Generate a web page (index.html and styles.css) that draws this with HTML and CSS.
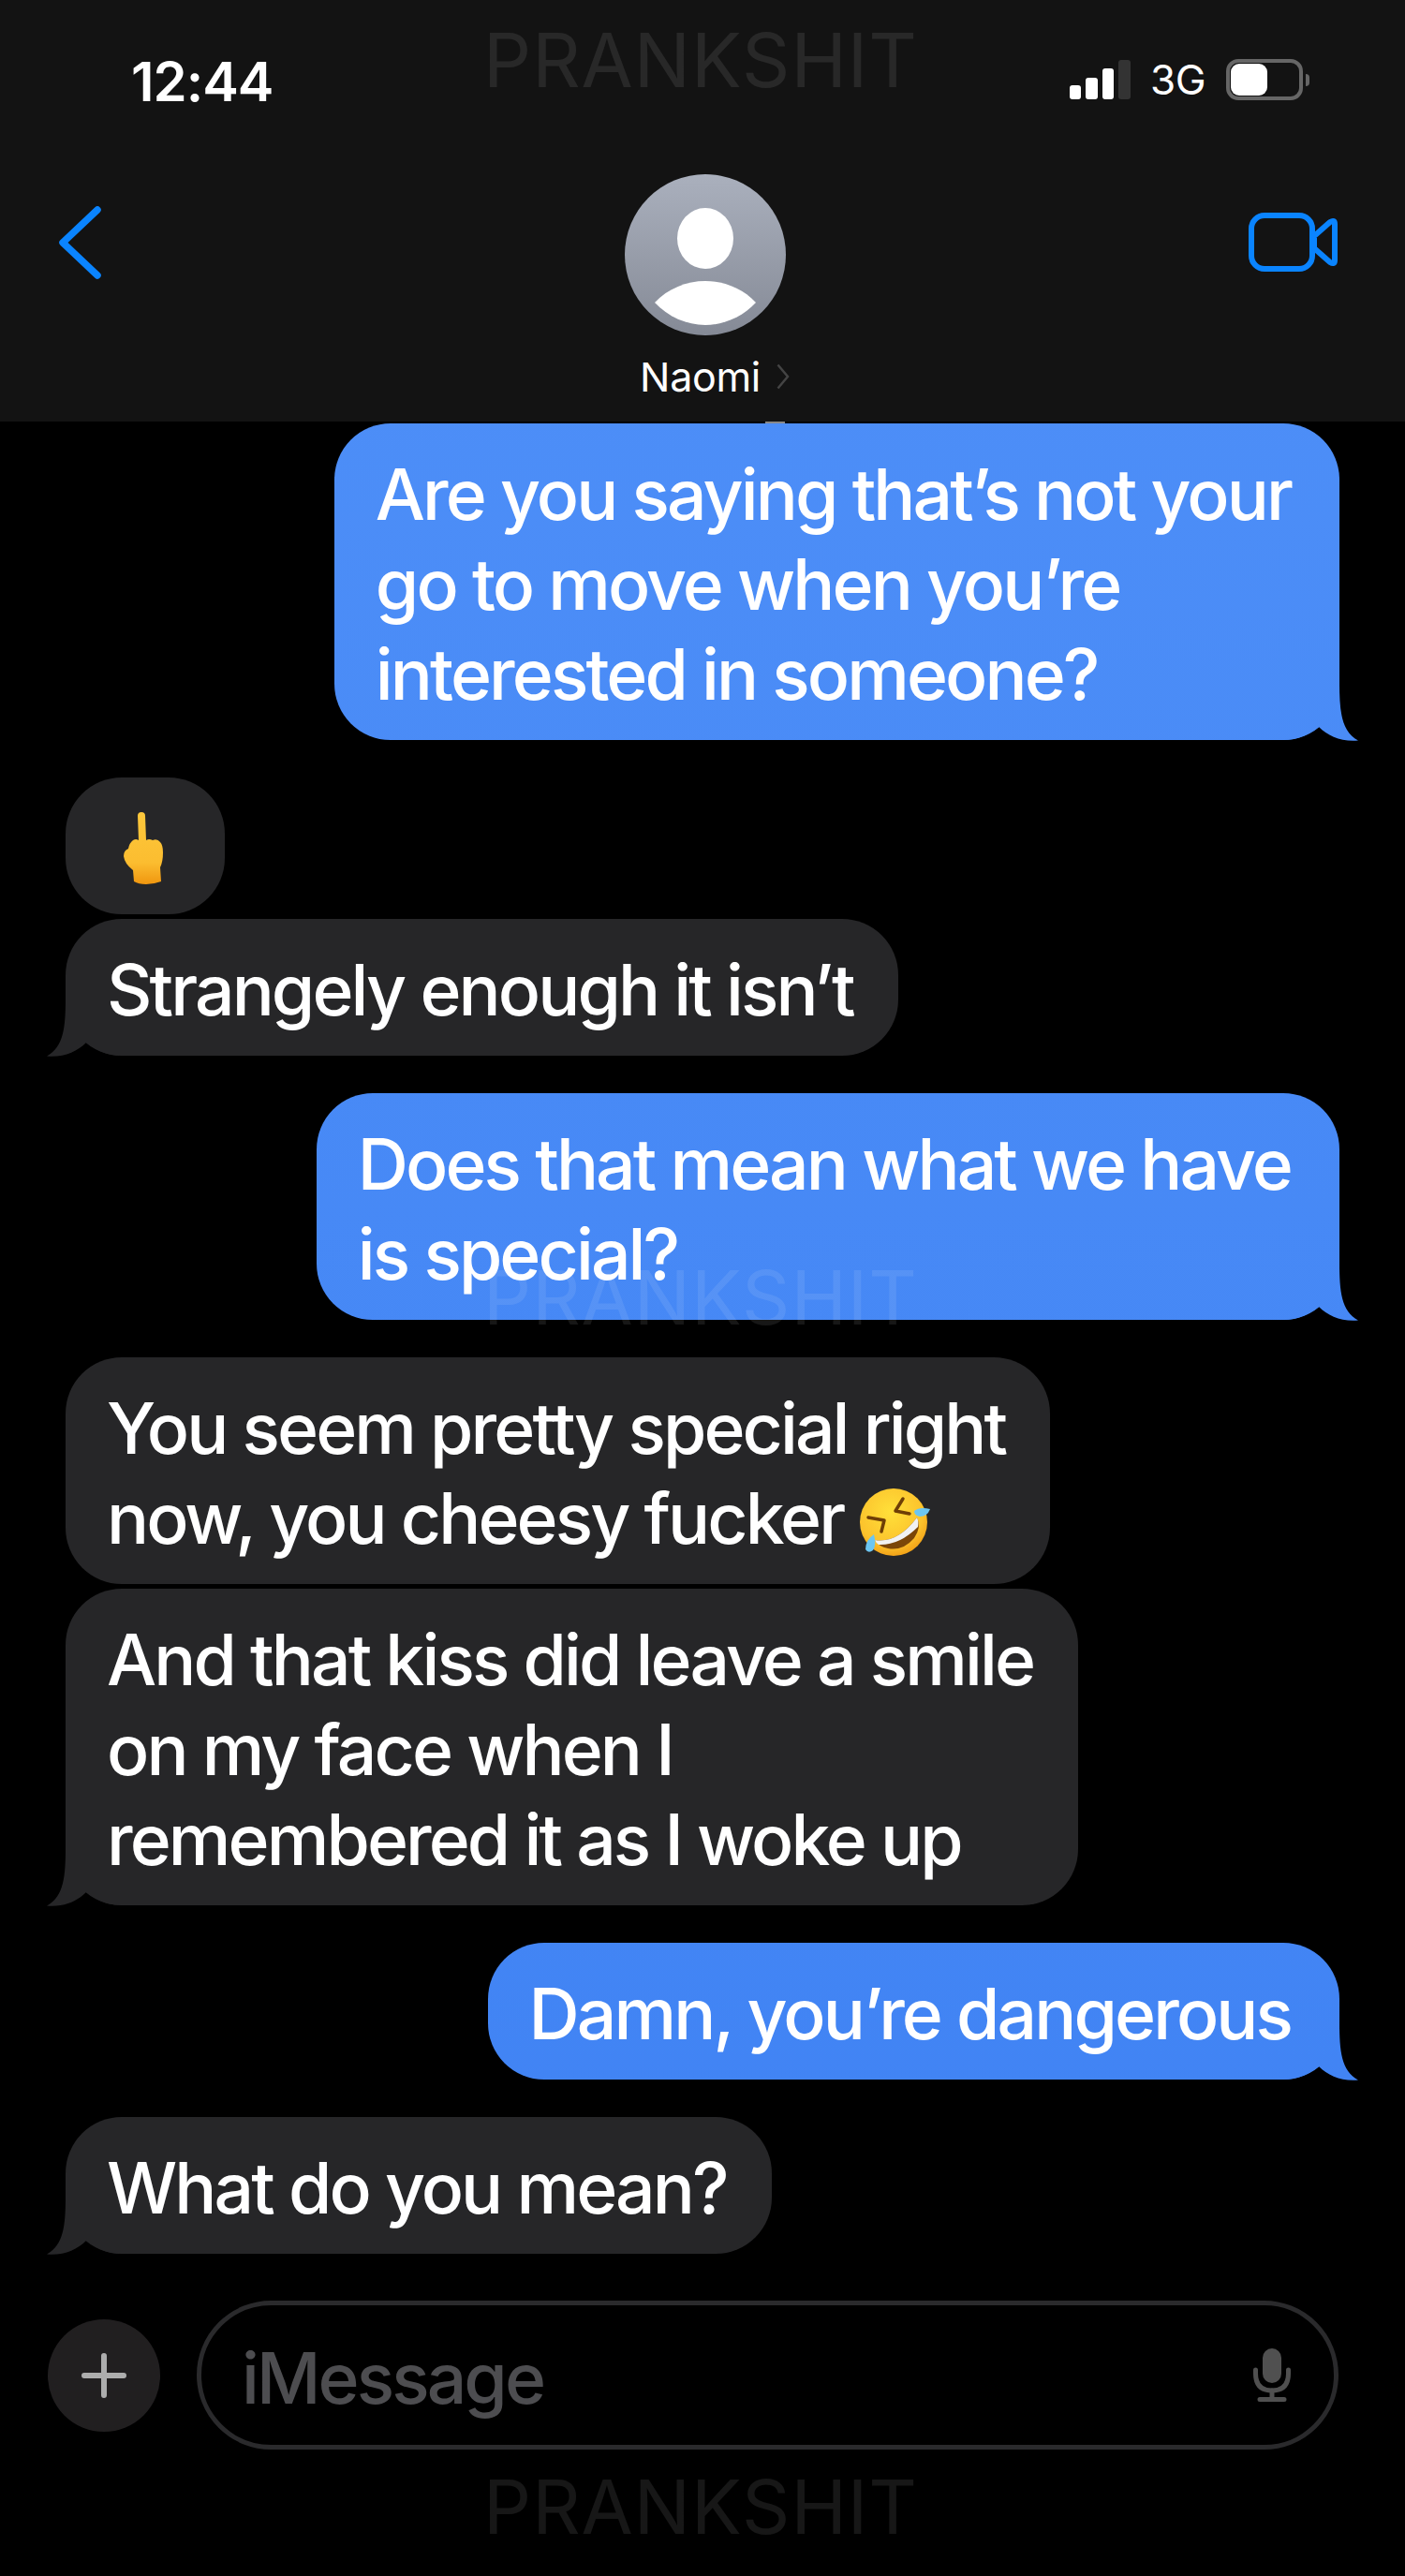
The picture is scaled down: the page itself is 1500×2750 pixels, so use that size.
FILE: index.html
```html
<!doctype html>
<html lang="en">
<head>
<meta charset="utf-8">
<meta name="viewport" content="width=device-width,initial-scale=1">
<title>Naomi</title>
<link rel="stylesheet" href="styles.css">
</head>
<body>
<div class="screen">
  <header class="top">
    <div class="status">
      <span class="time">12:44</span>
      <div class="status-right">
        <div class="signal"><i class="b1"></i><i class="b2"></i><i class="b3"></i><i class="b4"></i></div>
        <span class="net">3G</span>
        <div class="battery"><div class="cell"><div class="charge"></div></div><div class="nub"></div></div>
      </div>
    </div>
    <nav class="nav">
      <svg class="back" viewBox="0 0 46 78"><path d="M42 4 L5 39 L42 74" fill="none" stroke="#0a84ff" stroke-width="7.5" stroke-linecap="round" stroke-linejoin="round"/></svg>
      <div class="contact">
        <svg class="avatar" viewBox="0 0 172 172">
          <defs><linearGradient id="avatarFill" x1="0" y1="0" x2="0" y2="1"><stop offset="0" stop-color="#aab0bd"/><stop offset="1" stop-color="#858a96"/></linearGradient></defs>
          <circle cx="86" cy="86" r="86" fill="url(#avatarFill)"/>
          <ellipse cx="86" cy="68.5" rx="30" ry="32.5" fill="#fff"/>
          <path d="M32 137 C46 122 66 114 86 114 C106 114 126 122 140 137 C126 152 106 161 86 161 C66 161 46 152 32 137 Z" fill="#fff"/>
        </svg>
        <div class="name">Naomi<svg class="more" viewBox="0 0 14 28"><path d="M1.5 1.5 L12 14 L1.5 26.5" fill="none" stroke="#444" stroke-width="2.5"/></svg></div>
      </div>
      <svg class="video" viewBox="0 0 95 63">
        <rect x="3" y="3" width="65" height="57" rx="14" fill="none" stroke="#0a84ff" stroke-width="6"/>
        <path d="M70 25 L87 10 Q92 7 92 12 V51 Q92 56 87 53 L70 38 Z" fill="none" stroke="#0a84ff" stroke-width="6" stroke-linejoin="round"/>
      </svg>
    </nav>
    <div class="tick"></div>
  </header>

  <main class="thread">
    <div class="msg me">Are you saying that’s not your<br>go to move when you’re<br>interested in someone?</div>
    <div class="msg them no-tail gap emoji-only">
      <svg class="finger" viewBox="0 0 42 78">
        <defs><linearGradient id="skin" x1="0" y1="0" x2="0" y2="1"><stop offset="0" stop-color="#fdc83c"/><stop offset=".7" stop-color="#fbbd30"/><stop offset="1" stop-color="#f0960f"/></linearGradient></defs>
        <path d="M15 5 Q15 1 19 1 Q23 1 23 5 L24 31 Q27 29 31 31 Q36 29 39 33 Q42 36 42 44 Q42 54 39 60 L40 75 Q32 78 24 78 Q16 78 11 75 L10 63 Q1 56 0 48 Q0 42 5 40 Q6 34 10 31 Q13 29 16 31 Z" fill="url(#skin)"/>
      </svg>
    </div>
    <div class="msg them tight">Strangely enough it isn’t</div>
    <div class="msg me gap">Does that mean what we have<br>is special?</div>
    <div class="msg them no-tail gap">You seem pretty special right<br>now, you cheesy fucker <svg class="laugh" viewBox="0 0 75 74">
        <defs><radialGradient id="face" cx=".45" cy=".35" r=".7"><stop offset="0" stop-color="#ffe03a"/><stop offset=".7" stop-color="#fcc22c"/><stop offset="1" stop-color="#f09a12"/></radialGradient></defs>
        <circle cx="36" cy="37" r="36" fill="url(#face)"/>
        <path d="M16 56 Q40 60 61 32 Q66 42 58 54 Q46 68 30 65 Q20 63 16 56 Z" fill="#7b4608"/>
        <path d="M16 56 Q40 60 61 32 Q63 36 62 42 Q42 62 20 61 Q17 59 16 56 Z" fill="#f2f2f2"/>
        <path d="M46 12 L38 25 L53 28 M9 32 L26 35 L23 47" fill="none" stroke="#6e3e06" stroke-width="3.5" stroke-linejoin="round" stroke-linecap="round"/>
        <path d="M58 25 Q64 20 75 23 Q72 31 64 31 Q58 30 58 25 Z" fill="#6cc6f2"/>
        <path d="M6 66 Q6 56 15 50 Q18 62 14 67 Q9 71 6 66 Z" fill="#6cc6f2"/>
      </svg></div>
    <div class="msg them tight">And that kiss did leave a smile<br>on my face when I<br>remembered it as I woke up</div>
    <div class="msg me gap">Damn, you’re dangerous</div>
    <div class="msg them gap">What do you mean?</div>
  </main>

  <footer class="composer">
    <div class="plus"><svg viewBox="0 0 48 48"><path d="M24 3 V45 M3 24 H45" stroke="#adadad" stroke-width="6" stroke-linecap="round"/></svg></div>
    <div class="field">
      <span class="hint">iMessage</span>
      <svg class="mic" viewBox="0 0 40 57">
        <rect x="10" y="0" width="20" height="37" rx="10" fill="#505050"/>
        <path d="M2.5 23 V27 Q2.5 45 20 45 Q37.5 45 37.5 27 V23" fill="none" stroke="#505050" stroke-width="5" stroke-linecap="round"/>
        <path d="M20 45 V54 M7 54.5 H33" fill="none" stroke="#505050" stroke-width="5" stroke-linecap="round"/>
      </svg>
    </div>
  </footer>

  <!-- repeated mark, sits above everything -->
  <div class="mark mark-top">PRANKSHIT</div>
  <div class="mark mark-mid">PRANKSHIT</div>
  <div class="mark mark-low">PRANKSHIT</div>
</div>
</body>
</html>
```

FILE: styles.css
```css
:root{--blue:#0a84ff;--them:#262628;--bar:#131313;--line:#2a2a2c}
*{box-sizing:border-box}
body{margin:0;background:#000;color:#fff;font-family:Inter,"Liberation Sans",sans-serif}
.screen{position:relative;width:1500px;height:2750px;overflow:hidden;background:#000}

/* top bar */
.top{position:relative;height:450px;padding-top:65px;background:var(--bar)}
.status{display:flex;justify-content:space-between;align-items:center;height:44px;padding:0 102px 0 140px}
.time{font-size:58px;font-weight:600;letter-spacing:-1px;line-height:44px}
.status-right{display:flex;align-items:center;margin-top:-4px}
.signal{display:flex;align-items:flex-end;gap:5px;height:42px}
.signal i{display:block;width:12.5px;background:#fff;border-radius:3px}
.signal .b1{height:15px}.signal .b2{height:23px}.signal .b3{height:33px}.signal .b4{height:42px;background:#333}
.net{font-size:44px;font-weight:400;letter-spacing:-.5px;margin-left:21px;line-height:44px}
.battery{display:flex;align-items:center;margin-left:22px}
.cell{width:82px;height:44px;border:4px solid #666;border-radius:13px;padding:1px}
.charge{width:39px;height:34px;background:#fff;border-radius:9px}
.nub{width:4px;height:13px;margin-left:3px;background:#666;border-radius:0 4px 4px 0}

.nav{display:grid;grid-template-columns:605px 172px 1fr;align-items:start;padding:0 72px 0 62px;margin-top:77px}
.back{width:46px;height:78px;margin-top:34px}
.video{width:95px;height:63px;margin-top:41px;justify-self:end}
.contact{display:flex;flex-direction:column;align-items:center}
.avatar{display:block;width:172px;height:172px}
.name{position:relative;font-size:43px;line-height:50px;margin:19px 11px 0 0;letter-spacing:-.3px}
.more{position:absolute;left:100%;top:11px;margin-left:17px;width:14px;height:28px}
.tick{position:absolute;left:817px;top:450px;width:21px;height:2px;background:#888}

/* messages */
.thread{display:flex;flex-direction:column;padding:2px 70px 0}
.msg{position:relative;z-index:0;width:fit-content;font-size:75px;font-weight:450;line-height:96px;letter-spacing:-2.9px;white-space:nowrap;padding:28px 48px 22px 44px;border-radius:60px}
.me{align-self:flex-end;padding-right:52px;background:linear-gradient(#4f90f8,#3e81f3) fixed}
.them{background:var(--them)}
.gap{margin-top:40px}
.tight{margin-top:5px}

/* tail is one shape, mirrored for the incoming side; stays behind the bubble's text */
.msg::after{content:"";position:absolute;z-index:-1;bottom:-1px;width:80px;height:62px;background:inherit;clip-path:path("M60 0 C60 30 62 52 80 61.5 C62 63 48 57 38 47 C28 55 15 61 0 61 L0 0 Z")}
.me::after{right:-20px}
.them::after{left:-20px;transform:scaleX(-1)}
.no-tail::after{display:none}

.emoji-only{padding:36px 66px 32px 62px}
.finger{display:block;width:42px;height:78px}
.laugh{display:inline-block;width:75px;height:74px;vertical-align:-14px;margin-left:1px}

/* bottom input */
.composer{display:flex;align-items:center;gap:39px;padding:50px 71px 0 51px}
.plus{display:flex;align-items:center;justify-content:center;flex:none;width:120px;height:120px;border-radius:50%;background:#211f20}
.plus svg{width:48px;height:48px}
.field{flex:1;display:flex;align-items:center;justify-content:space-between;height:159px;border:5px solid var(--line);border-radius:80px;padding:0 46px 0 43px}
.hint{font-size:75px;font-weight:450;letter-spacing:-2.9px;color:#4d4d50;padding-top:6px}
.mic{width:40px;height:57px}

.mark{position:absolute;left:-2px;width:100%;text-align:center;font-size:80px;line-height:80px;letter-spacing:1px;color:rgba(255,255,255,.09);pointer-events:none}
.mark-top{top:24px}
.mark-mid{top:1345px}
.mark-low{top:2636px}
```
